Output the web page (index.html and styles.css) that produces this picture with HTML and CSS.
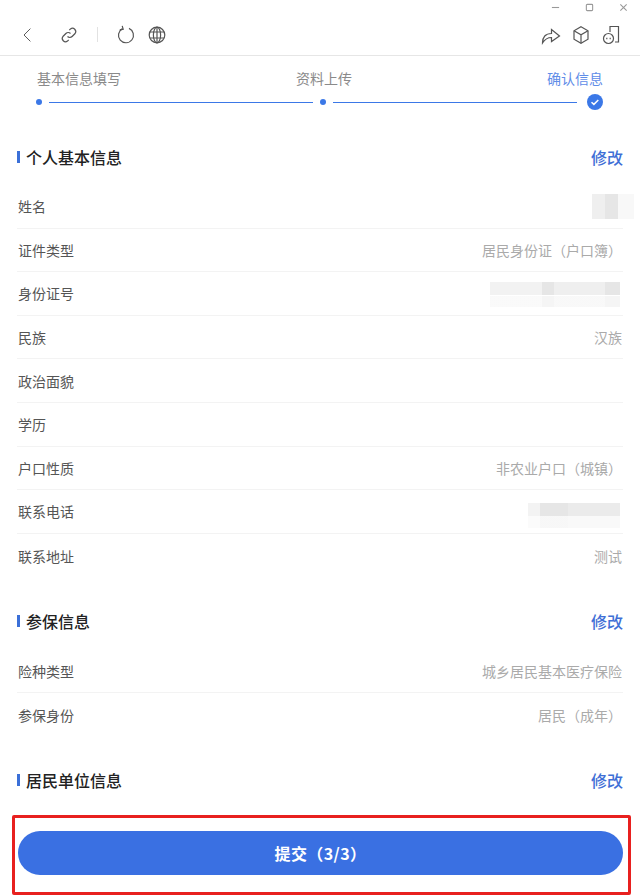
FILE: index.html
```html
<!DOCTYPE html>
<html lang="zh-CN">
<head>
    <meta charset="UTF-8">
    <meta name="viewport" content="width=device-width, initial-scale=1.0">
    <title>确认信息</title>
    <link rel="stylesheet" href="styles.css">
</head>
<body>
    <div class="window-controls">
        <svg class="win-icon" viewBox="0 0 10 10"><path d="M1 5h8"/></svg>
        <svg class="win-icon" viewBox="0 0 10 10"><rect x="1.5" y="1.5" width="7" height="7" rx="1"/></svg>
        <svg class="win-icon" viewBox="0 0 10 10"><path d="M1.5 1.5l7 7M8.5 1.5l-7 7"/></svg>
    </div>

    <div class="toolbar">
        <svg class="tool tool-back" viewBox="0 0 20 20"><path d="M13 2l-8 8 8 8"/></svg>
        <svg class="tool tool-link" viewBox="0 0 20 20"><path d="M8.5 11.5a3.2 3.2 0 0 0 4.6 0l3-3a3.3 3.3 0 0 0-4.6-4.6l-1.2 1.2"/><path d="M11.5 8.5a3.2 3.2 0 0 0-4.6 0l-3 3a3.3 3.3 0 0 0 4.6 4.6l1.2-1.2"/></svg>
        <span class="tool-divider"></span>
        <svg class="tool tool-refresh" viewBox="0 0 20 20"><path d="M6.5 3.6a7.5 7.5 0 1 0 6.5-.2"/><path d="M6.2 0.8l1 3.4-3.4.6"/></svg>
        <svg class="tool tool-globe" viewBox="0 0 20 20"><circle cx="10" cy="10" r="7.8"/><ellipse cx="10" cy="10" rx="3.6" ry="7.8"/><path d="M10 2.2v15.6M3 7h14M3 13h14"/></svg>
        <span class="toolbar-space"></span>
        <svg class="tool tool-share" viewBox="0 0 20 20"><path d="M1.5 18c0-6 3-9.500 9-9.500V4.500l8 6.500-8 5.500v-4c-4 0-6.500 1.500-9 5.500z"/></svg>
        <svg class="tool tool-box" viewBox="0 0 20 20"><path d="M10 1.800l7 4v8.400l-7 4-7-4V5.800z"/><path d="M3 5.800l7 4 7-4M10 9.800v8.400"/></svg>
        <svg class="tool tool-mini" viewBox="0 0 20 20"><path d="M8 7V1.500h8.500v15.500H13"/><circle cx="6.500" cy="13.500" r="5"/><path class="mini-dots" d="M4.200 13.500h1.200M7.600 13.500h1.200"/></svg>
    </div>

    <div class="steps">
        <div class="step-labels">
            <span class="step-label">基本信息填写</span>
            <span class="step-label step-label-mid">资料上传</span>
            <span class="step-label step-label-active">确认信息</span>
        </div>
        <div class="step-track">
            <span class="step-dot"></span>
            <span class="step-line step-line-first"></span>
            <span class="step-dot"></span>
            <span class="step-line"></span>
            <svg class="step-check" viewBox="0 0 16 16"><circle cx="8" cy="8" r="8"/><path d="M4.500 8.200l2.400 2.200 4.400-4.400"/></svg>
        </div>
    </div>

    <section class="section section-first">
        <div class="section-head">
            <h2 class="section-title">个人基本信息</h2>
            <a class="edit-link">修改</a>
        </div>
        <div class="row"><span class="row-label">姓名</span><span class="mosaic mosaic-name"></span></div>
        <div class="row"><span class="row-label">证件类型</span><span class="row-value">居民身份证（户口簿）</span></div>
        <div class="row"><span class="row-label">身份证号</span><span class="mosaic mosaic-id"></span></div>
        <div class="row"><span class="row-label">民族</span><span class="row-value">汉族</span></div>
        <div class="row"><span class="row-label">政治面貌</span></div>
        <div class="row"><span class="row-label">学历</span></div>
        <div class="row"><span class="row-label">户口性质</span><span class="row-value">非农业户口（城镇）</span></div>
        <div class="row"><span class="row-label">联系电话</span><span class="mosaic mosaic-phone"></span></div>
        <div class="row row-last"><span class="row-label">联系地址</span><span class="row-value">测试</span></div>
    </section>

    <section class="section">
        <div class="section-head">
            <h2 class="section-title">参保信息</h2>
            <a class="edit-link">修改</a>
        </div>
        <div class="row"><span class="row-label">险种类型</span><span class="row-value">城乡居民基本医疗保险</span></div>
        <div class="row row-last"><span class="row-label">参保身份</span><span class="row-value">居民（成年）</span></div>
    </section>

    <section class="section section-last">
        <div class="section-head">
            <h2 class="section-title">居民单位信息</h2>
            <a class="edit-link">修改</a>
        </div>
    </section>

    <div class="footer">
        <button class="submit" type="button">提交（3/3）</button>
    </div>
</body>
</html>
```

FILE: styles.css
```css
html, body {
    margin: 0;
    padding: 0;
}
body {
    width: 640px;
    height: 896px;
    overflow: hidden;
    background-color: #fff;
    font-family: "Noto Sans CJK SC", "Noto Sans", sans-serif;
    font-size: 14px;
    color: #555;
}

/* window top */
.window-controls {
    height: 14px;
    display: flex;
    align-items: center;
    justify-content: flex-end;
    gap: 25px;
    padding-right: 12px;
}
.win-icon {
    width: 9px;
    height: 9px;
    fill: none;
    stroke: #999;
    stroke-width: 1.2;
}
.toolbar {
    height: 41px;
    display: flex;
    align-items: center;
    padding: 0 18px 0 20px;
    border-bottom: 1px solid #e6e6e6;
}
.tool {
    width: 20px;
    height: 20px;
    fill: none;
    stroke: #555;
    stroke-width: 1.200;
    flex: none;
}
.tool-back {
    width: 16px;
    height: 18px;
}
.tool-link {
    margin-left: 23px;
}
.tool-divider {
    width: 1px;
    height: 15px;
    margin-left: 18px;
    background-color: #e2e2e2;
}
.tool-refresh {
    margin-left: 18px;
}
.tool-globe {
    margin-left: 11px;
}
.toolbar-space {
    flex: 1;
}
.tool-box {
    margin-left: 10px;
}
.tool-mini {
    margin-left: 11px;
}
.mini-dots {
    stroke-width: 1.500;
}

/* steps */
.steps {
    height: 64px;
    padding: 12px 37px 0 36px;
    box-sizing: border-box;
}
.step-labels {
    display: flex;
    line-height: 20px;
    height: 20px;
    padding-left: 1px;
}
.step-label {
    color: #8a8a8a;
}
.step-label-mid {
    margin-left: 175px;
}
.step-label-active {
    margin-left: auto;
    color: #5f8de8;
}
.step-track {
    display: flex;
    align-items: center;
    height: 16px;
    margin-top: 6px;
}
.step-dot {
    width: 6px;
    height: 6px;
    border-radius: 50%;
    background-color: #3b78e7;
    flex: none;
}
.step-line {
    flex: 1;
    height: 1px;
    margin: 0 10px 0 7px;
    background-color: #3b78e7;
}
.step-line-first {
    flex: none;
    width: 264px;
    margin-right: 7px;
}
.step-check {
    width: 16px;
    height: 16px;
    flex: none;
}
.step-check circle {
    fill: #3b78e7;
}
.step-check path {
    fill: none;
    stroke: #fff;
    stroke-width: 1.500;
}

/* sections */
.section {
    margin: 22px 17px 0 17px;
}
.section-first {
    margin-top: 15px;
}
.section-last {
    margin-top: 21px;
}
.section-head {
    height: 44px;
    margin-bottom: 6px;
    display: flex;
    align-items: center;
    justify-content: space-between;
}
.section-title {
    margin: 0;
    padding-left: 6px;
    font-size: 16px;
    font-weight: 500;
    color: #222;
    position: relative;
    left: 3px;
}
.section-title::before {
    content: "";
    position: absolute;
    left: -3px;
    top: 6px;
    width: 3px;
    height: 12px;
    background-color: #3b70d8;
}
.edit-link {
    font-size: 16px;
    font-weight: 500;
    color: #3f6fd6;
}
.row {
    height: 43.600px;
    box-sizing: border-box;
    padding: 0 1px;
    display: flex;
    align-items: center;
    justify-content: space-between;
    border-bottom: 1px solid #f3f3f3;
}
.row-last {
    border-bottom: none;
}
.row-label {
    color: #555;
}
.row-value {
    color: #aaa;
}

/* blurred values */
.mosaic {
    display: block;
    height: 25px;
}
.mosaic-name {
    width: 42px;
    margin-right: -12px;
    background: linear-gradient(90deg, #efefef 0 13px, #e6e6e6 13px 26px, #f8f8f8 26px);
}
.mosaic-id {
    width: 130px;
    margin: 2px 2px 0 0;
    background:
        linear-gradient(180deg, transparent 13px, #fff 13px, #fff 14px, rgba(255,255,255,0.6) 14px),
        linear-gradient(90deg, #f2f2f2 0 52px, #e6e6e6 52px 64px, #efefef 64px 115px, #e6e6e6 115px);
}
.mosaic-phone {
    width: 92px;
    margin: 8px 2px 0 0;
    background:
        linear-gradient(180deg, transparent 13px, rgba(255,255,255,0.7) 13px),
        linear-gradient(90deg, #f3f3f3 0 12px, #e6e6e6 12px 40px, #ebebeb 40px);
}

/* submit area */
.footer {
    margin: 13px 0 0 12px;
    width: 619px;
    height: 80px;
    box-sizing: border-box;
    border: 3px solid #e8201f;
    border-radius: 2px;
    padding: 13px 5px 0 3px;
}
.submit {
    display: block;
    width: 100%;
    height: 44px;
    border: none;
    border-radius: 22px;
    background-color: #3a70e2;
    color: #fff;
    font-family: "Noto Sans CJK SC", "Noto Sans", sans-serif;
    font-size: 16px;
    font-weight: 700;
    letter-spacing: 0.4px;
}
```
